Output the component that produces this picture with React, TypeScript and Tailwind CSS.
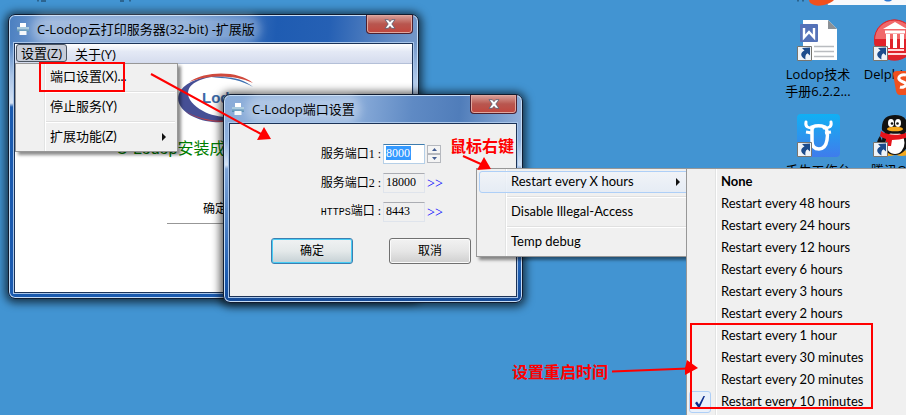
import type { ReactNode } from "react";

const UI = "font-['Open_Sans','Noto_Sans_CJK_SC',sans-serif]";
const MENU = "font-['Lato','Noto_Sans_CJK_SC',sans-serif]";
const SONG = "font-['Liberation_Serif','Noto_Sans_CJK_SC',sans-serif]";

function Printer() {
  return (
    <svg viewBox="0 0 14 14" className="h-3.5 w-3.5 shrink-0">
      <path d="M4 1h6v4H4z" fill="#fff" />
      <path d="M1 5h12v5H1z" fill="#7fabc9" />
      <path d="M1 5h12v2H1z" fill="#a9cadd" />
      <path d="M1 8.500h12V10H1z" fill="#5a90b5" />
      <path d="M3.500 9h7v4h-7z" fill="#f4f8fb" />
    </svg>
  );
}

function Shortcut() {
  return (
    <g>
      <path d="M3.500 32.500h14v14h-14z" fill="#eef3f8" stroke="#77756f" />
      <path d="M8 34l8-.5v8l-2.500-2.300C11.500 40.500 11 42.500 11.500 45.500 5.500 42 6.500 38.500 10.500 36.500z" fill="#1c4c8c" />
    </g>
  );
}

function DocIcon() {
  return (
    <svg viewBox="0 0 48 48" className="h-12 w-12">
      <path d="M9 6h25l9 9v31H9z" fill="#fff" />
      <path d="M34 6v9h9z" fill="#8c9196" />
      <path d="M20 32.500h20M20 37.500h20M20 42.500h20" stroke="#b9bcc0" strokeWidth="1.300" />
      <rect x="6" y="10" width="18" height="18" rx="1" fill="#5572b8" />
      <path d="M10 14v9.500l5-5.500 5 5.500V14" fill="none" stroke="#fff" strokeWidth="2.400" />
      <Shortcut />
    </svg>
  );
}

function DelphiIcon() {
  return (
    <svg viewBox="0 0 48 48" className="h-12 w-12">
      <circle cx="24.500" cy="26" r="20.500" fill="#e0222a" />
      <path d="M4.500 25a20 19 0 0 1 40 0z" fill="#f1696b" />
      <circle cx="24.500" cy="26" r="20" fill="none" stroke="#d5282e" />
      <path d="M25 8l12 7H13zM15 16.500h20v3H15zM16 20h4v14h-4zM23 20h4v14h-4zM30 20h4v14h-4z" fill="#fff" />
      <path d="M16 36h18M13 40h24" stroke="#ffd9d9" strokeWidth="2" />
      <Shortcut />
    </svg>
  );
}

function BullIcon() {
  return (
    <svg viewBox="0 0 48 48" className="h-12 w-12">
      <defs>
        <linearGradient id="bull" x1="0" y1="0" x2="0" y2="1">
          <stop offset="0" stopColor="#10b0f4" />
          <stop offset=".5" stopColor="#2a96ee" />
          <stop offset="1" stopColor="#3f7cec" />
        </linearGradient>
      </defs>
      <rect x="3" y="4" width="43" height="43" rx="4" fill="url(#bull)" />
      <path d="M12 12c-1 5 2 6 7 6M37 12c1 5-2 6-7 6" fill="none" stroke="#fff" strokeWidth="3" strokeLinecap="round" />
      <path d="M12 22l6 1M37 22l-6 1" stroke="#fff" strokeWidth="3" />
      <path d="M18 17c5-2 8-2 13 0 2 2 3 7 2 13s-4 9-8 9-7-2-7-8z" fill="none" stroke="#fff" strokeWidth="3.500" />
      <Shortcut />
    </svg>
  );
}

function PenguinIcon() {
  return (
    <svg viewBox="0 0 48 48" className="h-12 w-12">
      <path d="M10 26c-3 4-4 9-2 11l5-4M38 26c3 4 4 9 2 11l-5-4" fill="#111" />
      <ellipse cx="19" cy="43" rx="8" ry="3" fill="#f5a81c" />
      <ellipse cx="32" cy="43" rx="8" ry="3" fill="#f5a81c" />
      <ellipse cx="25" cy="31" rx="13" ry="14" fill="#111" />
      <ellipse cx="25" cy="33" rx="9.500" ry="11" fill="#fff" />
      <path d="M12 20C11 9 17 5 25 5s14 4 13 15c-3 5-23 5-26 0z" fill="#111" />
      <ellipse cx="21" cy="13" rx="3" ry="4" fill="#fff" />
      <ellipse cx="28" cy="13" rx="3" ry="4" fill="#fff" />
      <circle cx="22" cy="13.500" r="1.300" fill="#111" />
      <circle cx="27.500" cy="13.500" r="1.300" fill="#111" />
      <ellipse cx="25" cy="19" rx="8" ry="2.300" fill="#f5a81c" />
      <path d="M11 21c7 5 21 5 28 0l1 5c-5 3-12 4-18 4l-1 6h-5v-7c-3-1-5-2-6-3z" fill="#e5141b" />
      <Shortcut />
    </svg>
  );
}

function DesktopIcon({ icon, children }: { icon: ReactNode; children: ReactNode }) {
  return (
    <button type="button" className="flex h-24 w-19 flex-col items-center text-center text-[13px] leading-[17px] whitespace-nowrap">
      {icon}
      <span className="mt-1">{children}</span>
    </button>
  );
}

function CloseButton() {
  return (
    <button
      type="button"
      aria-label="关闭"
      className="flex h-[19px] w-[47px] items-center justify-center rounded-b-[4px] border border-t-0 border-[#4c2030] bg-linear-to-b from-[#d9a39d] via-[#b8564f] via-50% to-[#c1453c] shadow-[inset_0_0_0_1px_#e0a8a0]"
    >
      <svg viewBox="0 0 12 10" className="h-2.5 w-3">
        <path d="M1 .7h3.300L6 2.700 7.700.7H11L7.800 5 11 9.300H7.700L6 7.300 4.300 9.300H1L4.200 5z" fill="#fff" stroke="#565b6e" strokeWidth=".8" />
      </svg>
    </button>
  );
}

function Window({ title, className, children }: { title: string; className: string; children: ReactNode }) {
  return (
    <section
      className={`absolute flex flex-col rounded-[7px] border border-[#101c30] px-[5px] pb-[5px] shadow-[inset_0_0_0_1px_#c5dcf5,0_1px_9px_3px_rgba(0,0,0,0.65)] ${className}`}
    >
      <header className="flex h-7 shrink-0 items-start justify-between pl-0.5">
        <div className="flex h-full items-center gap-[7px]">
          <Printer />
          <h1 className="rounded-full bg-white/30 text-[13px] leading-4 whitespace-nowrap shadow-[0_0_8px_6px_rgba(255,255,255,0.3)]">{title}</h1>
        </div>
        <CloseButton />
      </header>
      <div className="flex min-h-0 flex-1 flex-col overflow-hidden border border-[#1c3357] shadow-[0_0_0_1px_#a9c6ea]">{children}</div>
    </section>
  );
}

function Caret() {
  return (
    <svg viewBox="0 0 4 8" className="mr-2 h-2 w-1">
      <path d="M0 0l4 4-4 4z" fill="#111" />
    </svg>
  );
}

function Menu({ items, active, className }: { items: { text: string; sub?: boolean }[]; active?: number; className: string }) {
  return (
    <ul
      role="menu"
      className={`absolute border border-[#979797] bg-[#f0f0f0] bg-[linear-gradient(90deg,transparent_28px,#e2e3e3_28px,#e2e3e3_29px,#fff_29px,#fff_30px,transparent_30px)] p-0.5 text-[13px] shadow-[3px_3px_3px_rgba(0,0,0,0.45)] ${MENU} ${className}`}
    >
      {items.map((item, i) => (
        <li key={item.text} role="none">
          {i > 0 && <hr className="my-[3px] ml-7 h-0.5 border-0 border-t border-[#e0e0e0] bg-white" />}
          <button
            type="button"
            role="menuitem"
            className={`flex h-[22px] w-full items-center justify-between rounded-[3px] border pl-[31px] whitespace-nowrap ${
              active === i ? "border-[#aecff7] bg-linear-to-b from-[#f1f4f9]/80 to-[#e3ebf6]/80" : "border-transparent"
            }`}
          >
            {item.text}
            {item.sub && <Caret />}
          </button>
        </li>
      ))}
    </ul>
  );
}

function Logo() {
  return (
    <svg viewBox="0 0 78 50" className="h-[50px] w-[78px]" aria-label="Lodop">
      <path d="M58 5C38-1 12 6 4 17c-10 15 8 30 32 32 14 1 28-2 36-8-14 5-34 4-46-3C6 27 6 12 26 6c10-3 22-3 32-1z" fill="#464f95" />
      <path d="M76 10C62-2 30-3 12 9 30 2 56 1 76 10z" fill="#d0493c" />
      <path d="M76 14C66 5 50 2 32 5c16-1 32 2 44 9z" fill="#3d6fb0" />
      <path d="M8 38c16 10 44 14 64 3-14 10-42 12-64-3z" fill="#b8404a" />
      <text x="25" y="30" className="font-['Liberation_Sans',sans-serif] text-[15px] font-bold" fill="#3d6aa8">Lodop</text>
    </svg>
  );
}

function PortRow({ id, label, value, primary }: { id: string; label: ReactNode; value: string; primary?: boolean }) {
  return (
    <div className="flex h-[29px] items-center">
      <label htmlFor={id} className="w-[153px] pr-0.5 text-right leading-4 whitespace-nowrap">
        {label}
      </label>
      <span className={`flex h-5 w-[42px] border px-0.5 ${primary ? "border-[#b5cfe7] border-t-[#3d7bad] bg-white" : "border-[#dfe4ec] border-t-[#abadb3] bg-[#f0f0f0]"}`}>
        <input
          id={id}
          defaultValue={value}
          readOnly={!primary}
          className={`mt-px h-[14px] leading-[14px] outline-none ${primary ? "w-[25px] bg-[#3399ff] text-white" : "w-full"}`}
        />
      </span>
      {primary ? (
        <span className="ml-0.5 flex flex-col">
          <button type="button" aria-label="增加" className="flex h-[9px] w-3.5 items-center justify-center border border-[#b5b8be] bg-[#f4f4f4]">
            <svg viewBox="0 0 5 3" className="h-[3px] w-[5px]"><path d="M0 3l2.500-3L5 3z" fill="#445e93" /></svg>
          </button>
          <button type="button" aria-label="减少" className="flex h-[9px] w-3.5 items-center justify-center border border-[#b5b8be] bg-[#f4f4f4]">
            <svg viewBox="0 0 5 3" className="h-[3px] w-[5px]"><path d="M0 0l2.500 3L5 0z" fill="#445e93" /></svg>
          </button>
        </span>
      ) : (
        <a href="#port" className="ml-0.5 pt-0.5 text-sm leading-4 text-[#0000ff]">&gt;&gt;</a>
      )}
    </div>
  );
}

const intervals = [
  "None",
  "Restart every 48 hours",
  "Restart every 24 hours",
  "Restart every 12 hours",
  "Restart every 6 hours",
  "Restart every 3 hours",
  "Restart every 2 hours",
  "Restart every 1 hour",
  "Restart every 30 minutes",
  "Restart every 20 minutes",
  "Restart every 10 minutes",
];

export default function App() {
  return (
    <main className={`relative h-screen w-full overflow-hidden bg-[#4294d2] text-black ${UI}`}>
      <div className="absolute top-3.5 left-[780px] grid grid-cols-[76px_76px]">
        <DesktopIcon icon={<DocIcon />}>Lodop技术<br />手册6.2.2...</DesktopIcon>
        <DesktopIcon icon={<DelphiIcon />}>Delphi 2...</DesktopIcon>
        <DesktopIcon icon={<BullIcon />}>千牛工作台</DesktopIcon>
        <DesktopIcon icon={<PenguinIcon />}>腾讯QQ</DesktopIcon>
      </div>
      <svg viewBox="0 0 100 100" className="absolute top-0 left-[806px] h-[100px] w-[100px]">
        <path d="M20 0h80v5H22z" fill="#f7f9fc" />
        <path d="M3 0h25c-4 4-14 7-20 5-3-1-5-3-5-5z" fill="#f0501e" />
        <path d="M78 0h8c-2 2-6 2-8 0z" fill="#2d78d2" />
        <path d="M87 74q0-3 4-3h9v24h-6q-3 0-4-4z" fill="#f0501e" />
        <path d="M100 75c-4-1-8 1-7 4s7 3 7 5-3 4-6 3" fill="none" stroke="#fff" strokeWidth="3" />
      </svg>

      <Window
        title="C-Lodop云打印服务器(32-bit) -扩展版"
        className="top-3.5 left-2 h-[285px] w-[411px] bg-[linear-gradient(180deg,transparent_28px,#a8c3e6_60px,#d5e2f3_88px,#1b5bb0_92px,#1b5bb0_100%),linear-gradient(95deg,#4a7fc0_0%,#7b9fd2_10%,#6d96cc_40%,#1f5cb2_62%,#2560b4_74%,#5f88c2_88%,#86a5d0_100%)]"
      >
        <nav className="flex h-5 shrink-0 border-b border-[#b4c0d8] bg-linear-to-b from-white via-[#e4e9f5] via-40% to-[#d5dcee] text-[13px] leading-[17px]">
          <button type="button" className="ml-px h-[18px] w-[51px] rounded-[3px] border border-[#4b5562] bg-[#c6ccd8] leading-4">设置(Z)</button>
          <button type="button" className="ml-2 leading-[18px] whitespace-nowrap">关于(Y)</button>
        </nav>
        <div className="flex-1 overflow-hidden bg-white">
          <div className="flex pt-[9px] pl-[162px]"><Logo /></div>
          <p className="mt-4 pl-[101px] font-['Liberation_Sans','Noto_Sans_CJK_SC',sans-serif] text-base leading-5 whitespace-nowrap text-[#008000]">C-Lodop安装成</p>
          <div className="mt-9 ml-[152px] w-24 border-b border-[#979797] pb-[3px] text-center">
            <button type="button" className="text-xs leading-[22px]">确定</button>
          </div>
        </div>
      </Window>
      <Menu
        className="top-[63px] left-[15px] h-[89px] w-[163px]"
        items={[{ text: "端口设置(X)..." }, { text: "停止服务(Y)" }, { text: "扩展功能(Z)", sub: true }]}
      />

      <Window
        title="C-Lodop端口设置"
        className="top-[94px] left-[223px] h-[209px] w-[300px] bg-[linear-gradient(180deg,transparent_28px,#8fb1de_45px,#d5e2f3_70px,#7fa4d6_74px,#1b5bb0_180px,#164a96_100%),linear-gradient(95deg,#8aacd8_0%,#8fb0dc_40%,#5f8ac4_60%,#507dba_75%,#a2bce0_100%)]"
      >
        <form className={`flex-1 bg-[#f0f0f0] pt-[15px] text-xs ${SONG}`} onSubmit={(e) => e.preventDefault()}>
          <PortRow id="port1" label="服务端口1 :" value="8000" primary />
          <PortRow id="port2" label="服务端口2 :" value="18000" />
          <PortRow id="port3" label={<><span className="font-['Liberation_Mono',monospace] text-[10px]">HTTPS</span>端口 :</>} value="8443" />
          <div className="mt-3 ml-[41px] flex gap-9">
            <button type="submit" className="h-[26px] w-[82px] rounded-[3px] border border-[#3c7fb1] bg-linear-to-b from-[#f0f2f3] via-[#e4e9ea] via-50% to-[#c5d0d4] shadow-[inset_0_0_0_1px_#48cdf5]">确定</button>
            <button type="button" className="h-[26px] w-[82px] rounded-[3px] border border-[#707070] bg-linear-to-b from-[#f2f2f2] via-[#e6e6e6] via-50% to-[#cfcfcf] shadow-[inset_0_0_0_1px_#fafafa]">取消</button>
          </div>
        </form>
      </Window>

      <Menu
        className="top-[168px] left-[476px] h-[89px] w-[216px]"
        active={0}
        items={[{ text: "Restart every X hours", sub: true }, { text: "Disable Illegal-Access" }, { text: "Temp debug" }]}
      />
      <ul
        role="menu"
        className={`absolute top-[168px] right-0 left-[686px] border border-r-0 border-[#979797] bg-[#f0f0f0] bg-[linear-gradient(90deg,transparent_28px,#e2e3e3_28px,#e2e3e3_29px,#fff_29px,#fff_30px,transparent_30px)] py-0.5 pl-0.5 text-[13px] ${MENU}`}
      >
        {intervals.map((text, i) => (
          <li key={text} role="none">
            <button type="button" role="menuitemradio" aria-checked={i === 10} className="flex h-[22px] w-full items-center whitespace-nowrap">
              <span className={`mr-2.5 flex h-[22px] w-[22px] items-center justify-center rounded-[3px] ${i === 10 ? "border border-[#aecff7] bg-[#e9f0fa]" : ""}`}>
                {i === 10 && (
                  <svg viewBox="0 0 10 12" className="h-3 w-2.5">
                    <path d="M0 7l2-1.500 2 3L8.500 0H10L4.500 12H3.500z" fill="#0c2c8c" />
                  </svg>
                )}
              </span>
              <span className={i === 0 ? "font-bold" : ""}>{text}</span>
            </button>
          </li>
        ))}
      </ul>

      <p className="absolute top-[134px] left-[450px] font-['Noto_Sans_CJK_SC',sans-serif] text-base leading-[22px] font-bold whitespace-nowrap text-[#ff0000]">鼠标右键</p>
      <p className="absolute top-[360px] left-[512px] font-['Noto_Sans_CJK_SC',sans-serif] text-base leading-[22px] font-bold whitespace-nowrap text-[#ff0000]">设置重启时间</p>
      <svg viewBox="0 0 906 415" className="pointer-events-none absolute top-0 left-0 h-[415px] w-[906px]">
        <path d="M38 0v1.500M41 1h5M120 1h4M130 0v1.500M798 0v1.500M803 0v1.500" fill="none" stroke="#16344d" />
        <g fill="none" stroke="#ff0000" strokeWidth="2">
          <path d="M40 63h84v28H40zM691 324h181v84H691z" />
          <path d="M151 74l110 60M463 156l20 9M612 371.500l76-3" />
        </g>
        <path d="M271 139l-14 1 7-13zM491 169l-14 1 7-13zM698 368l-13 7v-7l2-8z" fill="#ff0000" />
      </svg>
    </main>
  );
}
